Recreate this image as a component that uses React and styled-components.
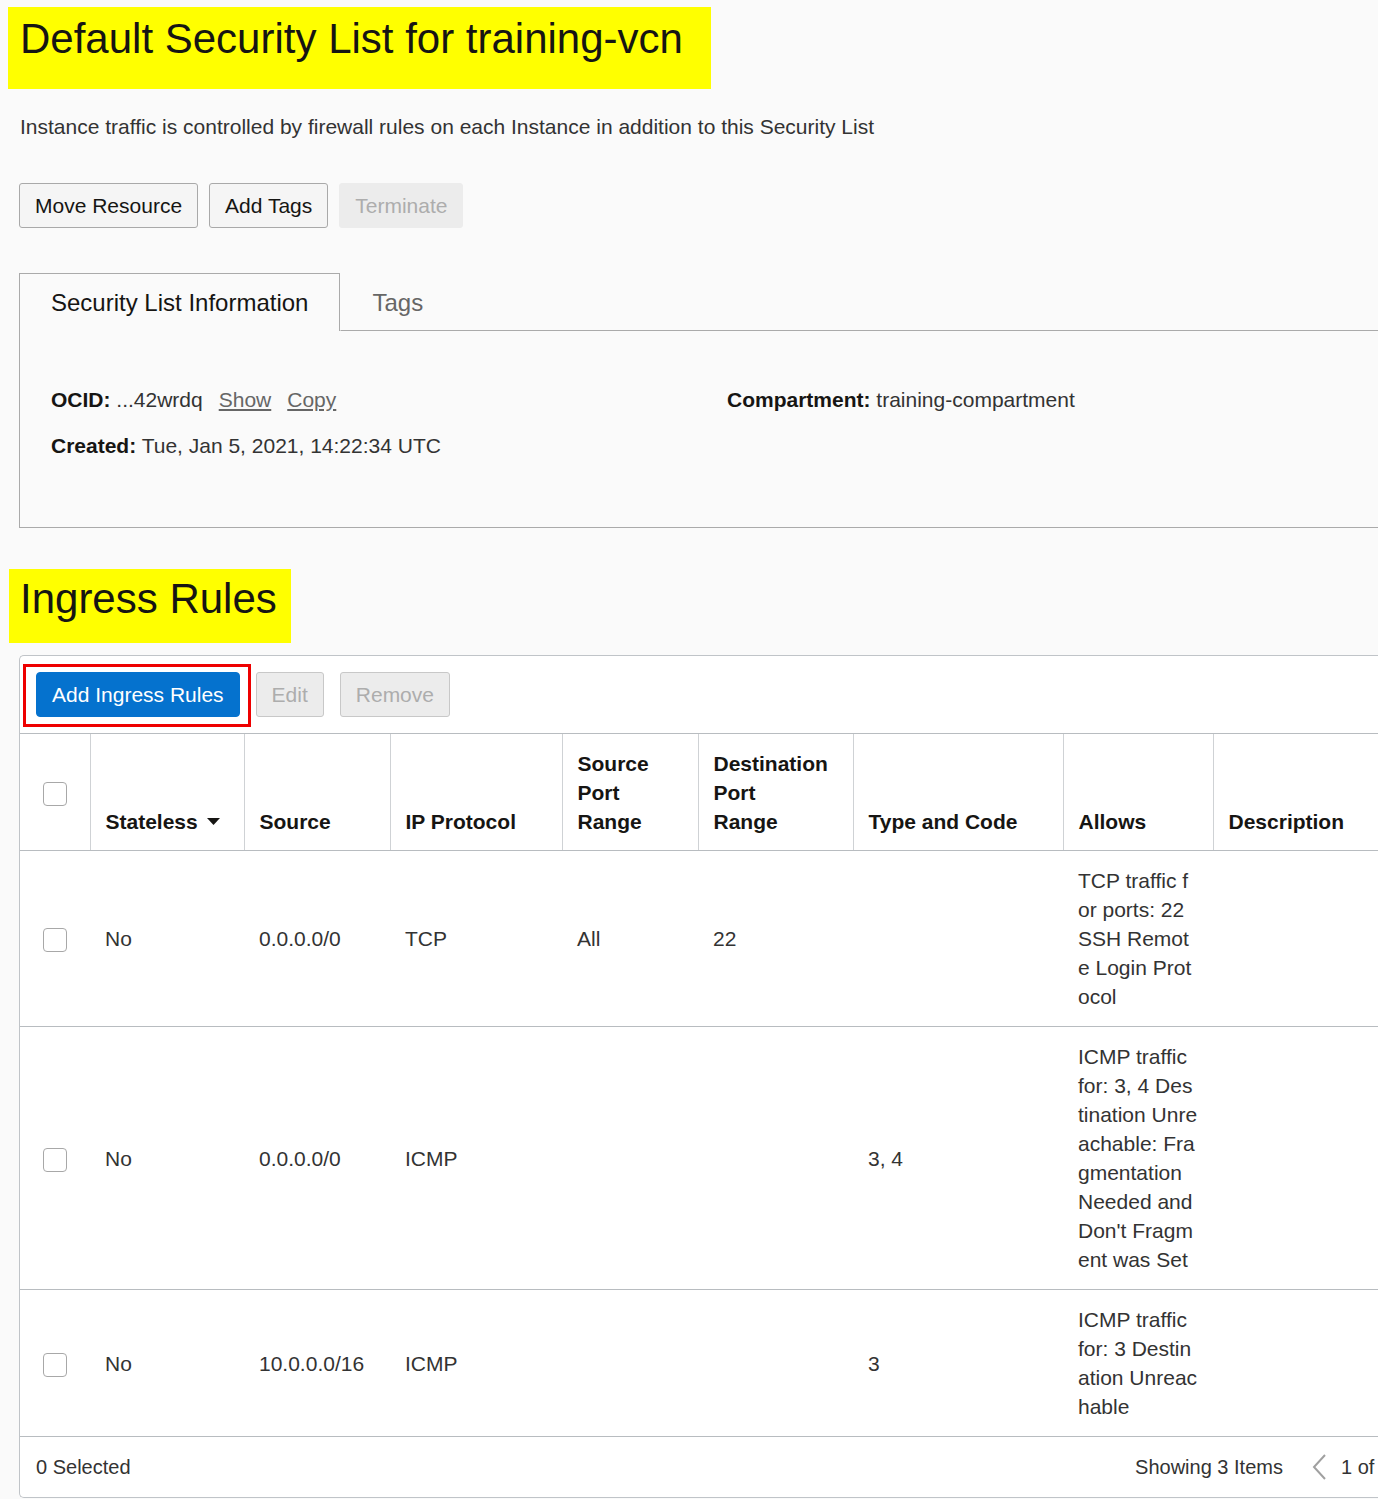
import React from "react";
import styled, { createGlobalStyle } from "styled-components";

const GlobalStyle = createGlobalStyle`
  body {
    margin: 0;
    background: #fafafa;
    font-family: "Liberation Sans", Arial, sans-serif;
    color: #333;
    overflow-x: hidden;
  }
`;

const Page = styled.div`
  width: 1436px;
  padding: 7px 0 0 8px;
  box-sizing: border-box;
`;

const Highlight = styled.h1`
  width: fit-content;
  margin: ${(p) => p.$margin || "0"};
  padding: ${(p) => p.$pad};
  background: #ffff00;
  color: #161513;
  font-size: 42px;
  font-weight: 400;
  line-height: 48px;
`;

const Intro = styled.p`
  margin: 23px 0 0 12px;
  font-size: 21px;
  line-height: 30px;
  color: #333;
`;

const ButtonRow = styled.div`
  display: flex;
  gap: 11px;
  margin: 41px 0 0 11px;
`;

const Button = styled.button`
  height: 45px;
  padding: 0 15px;
  font-family: inherit;
  font-size: 21px;
  border-radius: 3px;
  border: 1px solid #a9a9a9;
  background: #f5f5f5;
  color: #161513;
  cursor: pointer;

  &:disabled {
    background: #ececec;
    border-color: ${(p) => (p.$flat ? "#ececec" : "#c8c8c8")};
    color: #adadad;
    cursor: default;
  }
`;

const PrimaryButton = styled(Button)`
  background: #0572ce;
  border-color: #0572ce;
  color: #fff;
  border-radius: 4px;
`;

const Marked = styled.span`
  position: relative;
  display: inline-flex;

  &::after {
    content: "";
    position: absolute;
    top: -8px;
    right: -11px;
    bottom: -10px;
    left: -13px;
    border: 3px solid #ee0000;
    pointer-events: none;
  }
`;

const TabBar = styled.div`
  display: flex;
  margin: 45px 0 0 11px;
  height: 58px;
`;

const Tab = styled.div`
  box-sizing: border-box;
  padding: 0 31px;
  font-size: 24px;
  line-height: 57px;
  white-space: nowrap;
  color: ${(p) => (p.$active ? "#161513" : "#666")};
  border: 1px solid transparent;
  border-color: ${(p) => (p.$active ? "#aaa" : "transparent")};
  border-bottom: ${(p) => (p.$active ? "none" : "1px solid #aaa")};
  flex: ${(p) => (p.$active ? "0 0 320px" : "1")};
`;

const Panel = styled.div`
  margin-left: 11px;
  height: 197px;
  box-sizing: border-box;
  padding: 54px 0 0 31px;
  border-left: 1px solid #aaa;
  border-bottom: 1px solid #aaa;
  display: grid;
  grid-template-columns: 676px 1fr;
  grid-auto-rows: 30px;
  row-gap: 16px;
  font-size: 21px;
  line-height: 30px;
`;

const Label = styled.b`
  color: #161513;
`;

const Link = styled.a`
  margin-left: 16px;
  color: #666;
  text-decoration: underline;
  cursor: pointer;
`;

const Card = styled.div`
  margin: 12px 0 0 11px;
  background: #fff;
  border: 1px solid #c0c4c8;
  border-right: none;
  border-radius: 5px 0 0 5px;
`;

const Toolbar = styled.div`
  display: flex;
  align-items: center;
  gap: 16px;
  padding: 16px;
`;

const Table = styled.table`
  width: 100%;
  border-collapse: collapse;
  table-layout: fixed;
  font-size: 21px;
  line-height: 29px;
`;

const Th = styled.th`
  padding: 15px 15px 14px;
  text-align: ${(p) => (p.$center ? "center" : "left")};
  vertical-align: ${(p) => (p.$center ? "middle" : "bottom")};
  font-weight: 700;
  color: #161513;
  border-top: 1px solid #b8bcc0;
  border-bottom: 1px solid #b8bcc0;
  border-left: 1px solid #cfd2d5;

  &:first-child {
    border-left: none;
  }
`;

const Td = styled.td`
  padding: 15px;
  text-align: ${(p) => (p.$center ? "center" : "left")};
  vertical-align: middle;
  color: #333;
  word-break: break-all;
`;

const Row = styled.tr`
  border-bottom: 1px solid #b8bcc0;
`;

const Check = styled.span`
  display: inline-block;
  width: 24px;
  height: 24px;
  box-sizing: border-box;
  border: 1px solid #a8a8a8;
  border-radius: 4px;
  background: #fff;
  vertical-align: middle;
`;

const SortLabel = styled.span`
  display: inline-flex;
  align-items: center;
  gap: 9px;
`;

const Footer = styled.div`
  display: flex;
  justify-content: space-between;
  align-items: center;
  height: 60px;
  padding: 0 16px;
  font-size: 20px;
  color: #333;
`;

const Pager = styled.div`
  display: flex;
  align-items: center;
  gap: 15px;
`;

const ItemCount = styled.span`
  margin-right: 14px;
`;

const Chevron = ({ dir = "left" }) => (
  <svg width="14" height="26" viewBox="0 0 14 26">
    <polyline
      points={dir === "left" ? "13,1 2,13 13,25" : "1,1 12,13 1,25"}
      fill="none"
      stroke="#a0a0a0"
      strokeWidth="2"
    />
  </svg>
);

const widths = [70, 154, 146, 172, 136, 155, 210, 150, 223];

const rules = [
  {
    source: "0.0.0.0/0",
    protocol: "TCP",
    srcPort: "All",
    dstPort: "22",
    typeCode: "",
    allows: "TCP traffic for ports: 22 SSH Remote Login Protocol",
  },
  {
    source: "0.0.0.0/0",
    protocol: "ICMP",
    srcPort: "",
    dstPort: "",
    typeCode: "3, 4",
    allows:
      "ICMP traffic for: 3, 4 Destination Unreachable: Fragmentation Needed and Don't Fragment was Set",
  },
  {
    source: "10.0.0.0/16",
    protocol: "ICMP",
    srcPort: "",
    dstPort: "",
    typeCode: "3",
    allows: "ICMP traffic for: 3 Destination Unreachable",
  },
];

export default function App() {
  return (
    <>
      <GlobalStyle />
      <Page>
        <Highlight $pad="8px 28px 26px 12px">
          Default Security List for training-vcn
        </Highlight>
        <Intro>
          Instance traffic is controlled by firewall rules on each Instance in
          addition to this Security List
        </Intro>

        <ButtonRow>
          <Button>Move Resource</Button>
          <Button>Add Tags</Button>
          <Button disabled $flat>
            Terminate
          </Button>
        </ButtonRow>

        <TabBar>
          <Tab $active>Security List Information</Tab>
          <Tab>Tags</Tab>
        </TabBar>
        <Panel>
          <div>
            <Label>OCID:</Label> ...42wrdq<Link>Show</Link>
            <Link>Copy</Link>
          </div>
          <div>
            <Label>Compartment:</Label> training-compartment
          </div>
          <div>
            <Label>Created:</Label> Tue, Jan 5, 2021, 14:22:34 UTC
          </div>
        </Panel>

        <Highlight $margin="41px 0 0 1px" $pad="6px 14px 20px 11px">
          Ingress Rules
        </Highlight>

        <Card>
          <Toolbar>
            <Marked>
              <PrimaryButton>Add Ingress Rules</PrimaryButton>
            </Marked>
            <Button disabled>Edit</Button>
            <Button disabled>Remove</Button>
          </Toolbar>
          <Table>
            <colgroup>
              {widths.map((w, i) => (
                <col key={i} style={{ width: w }} />
              ))}
            </colgroup>
            <thead>
              <tr>
                <Th $center>
                  <Check />
                </Th>
                <Th>
                  <SortLabel>
                    Stateless
                    <svg width="13" height="7" viewBox="0 0 13 7">
                      <polygon points="0,0 13,0 6.5,7" fill="#161513" />
                    </svg>
                  </SortLabel>
                </Th>
                <Th>Source</Th>
                <Th>IP Protocol</Th>
                <Th>Source Port Range</Th>
                <Th>
                  Destination
                  <br />
                  Port
                  <br />
                  Range
                </Th>
                <Th>Type and Code</Th>
                <Th>Allows</Th>
                <Th>Description</Th>
              </tr>
            </thead>
            <tbody>
              {rules.map((r, i) => (
                <Row key={i}>
                  <Td $center>
                    <Check />
                  </Td>
                  <Td>No</Td>
                  <Td>{r.source}</Td>
                  <Td>{r.protocol}</Td>
                  <Td>{r.srcPort}</Td>
                  <Td>{r.dstPort}</Td>
                  <Td>{r.typeCode}</Td>
                  <Td>{r.allows}</Td>
                  <Td></Td>
                </Row>
              ))}
            </tbody>
          </Table>
          <Footer>
            <span>0 Selected</span>
            <Pager>
              <ItemCount>Showing 3 Items</ItemCount>
              <Chevron dir="left" />
              <span>1 of 1</span>
              <Chevron dir="right" />
            </Pager>
          </Footer>
        </Card>
      </Page>
    </>
  );
}
